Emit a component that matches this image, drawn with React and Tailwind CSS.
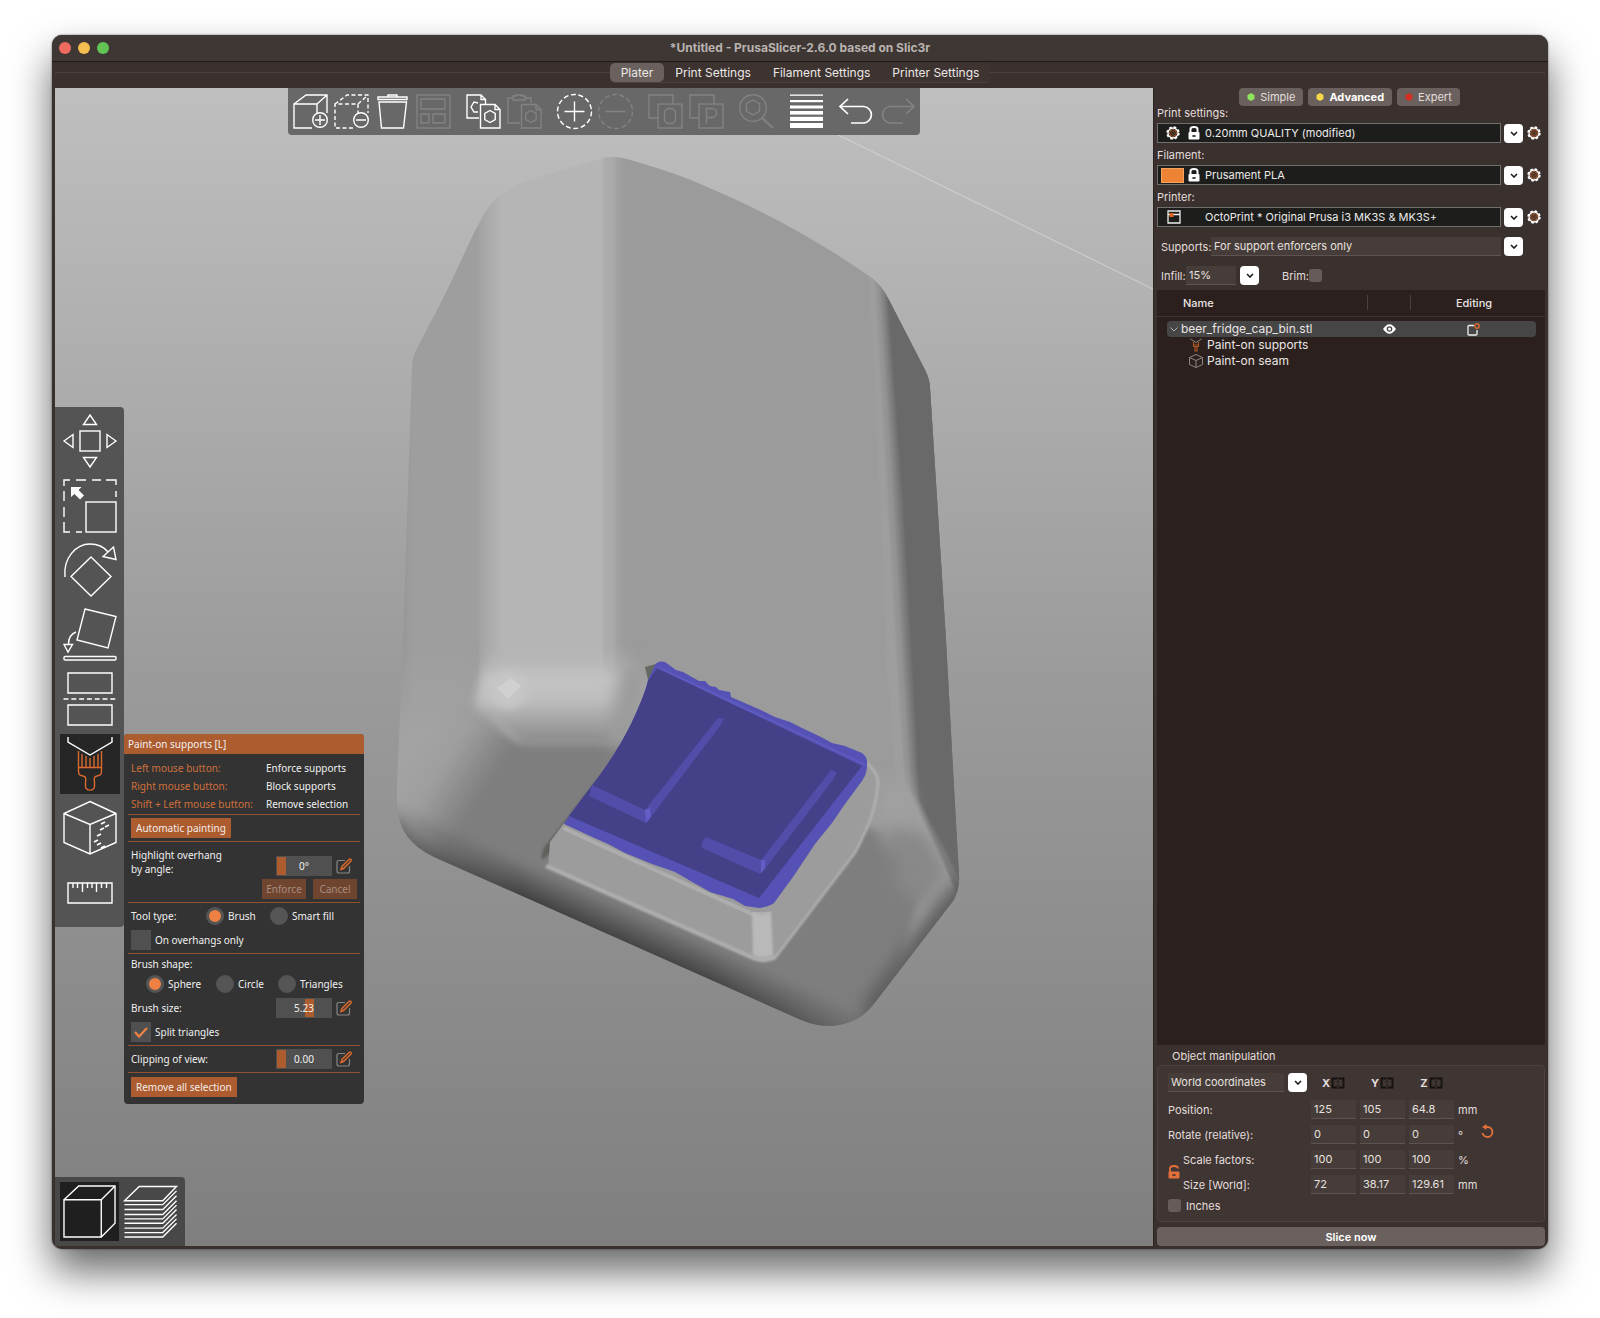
import React, { useState } from "react";

const Icon = ({ size = 54, className = "", children }) => (
    <svg
        viewBox={`0 0 ${size} ${size}`}
        className={`block h-full w-full overflow-visible ${className}`}
        fill="none"
        stroke="currentColor"
        strokeWidth="1.4"
        aria-hidden="true"
    >
        {children}
    </svg>
);

const hex = (cx, cy, r) =>
    [[0, -1], [0.87, -0.5], [0.87, 0.5], [0, 1], [-0.87, 0.5], [-0.87, -0.5]]
        .map(([x, y]) => `${cx + x * r},${cy + y * r}`)
        .join(" ");

const topIcons = {
    add: (
        <>
            <path d="M19 34H1V10H24V19M1 10L13 1H34V19M24 10L34 1" />
            <circle cx="27" cy="26" r="7.3" />
            <path d="M27 21V31M22 26H32" />
        </>
    ),
    remove: (
        <>
            <path d="M19 34H1V10H24V19M1 10L13 1H34V19M24 10L34 1" strokeDasharray="4 2.5" />
            <circle cx="27" cy="26" r="7.3" />
            <path d="M22 26H32" />
        </>
    ),
    trash: (
        <>
            <path d="M3 3H32V5.5H3ZM13 3V1H22V3M4 8L6.5 34H28.5L31.5 8Z" />
        </>
    ),
    arrange: (
        <>
            <rect x="1" y="1" width="33" height="33" />
            <path d="M5 5H29V15H5ZM5 20H13V29H5ZM17 20H29V29H17Z" />
        </>
    ),
    copy: (
        <>
            <path d="M13 24H1V1H15L19.5 5.500V10M15 1V5.500H19.500M12 9L8 8L5 13L8 18H12" />
            <path d="M14.500 10.500H29L34 15.500V34H14.500ZM29 10.500V15.500H34" />
            <polygon points={hex(24, 22.500, 6)} />
        </>
    ),
    paste: (
        <>
            <path d="M13 29H1V4H6M18 4H24V9M6 2H9V1H15V2H18V6H6Z" />
            <path d="M14.500 10.500H29L34 15.500V34H14.500ZM29 10.500V15.500H34" />
            <polygon points={hex(24, 22.500, 6)} />
        </>
    ),
    addInstance: (
        <>
            <circle cx="17.5" cy="17.5" r="17" strokeDasharray="5 2.6" />
            <path d="M17.500 7.500V27.500M7.500 17.500H27.500" />
        </>
    ),
    removeInstance: (
        <>
            <circle cx="17.5" cy="17.5" r="17" strokeDasharray="5 2.600" />
            <path d="M7.500 17.500H27.500" />
        </>
    ),
    splitObjects: (
        <>
            <path d="M10 24H1V1H25V10" />
            <rect x="10" y="10" width="24" height="24" />
            <rect x="16.500" y="14.500" width="11" height="15" rx="4.500" />
        </>
    ),
    splitParts: (
        <>
            <path d="M10 24H1V1H25V10" />
            <rect x="10" y="10" width="24" height="24" />
            <path d="M17.500 30V14.500H23A4.500 4.500 0 0 1 23 23.500H17.500" />
        </>
    ),
    search: (
        <>
            <circle cx="14" cy="14" r="13.3" />
            <polygon points={hex(14, 13.500, 7.500)} />
            <path d="M23 24L34 34" strokeWidth="2.200" />
        </>
    ),
    layers: (
        <g fill="currentColor" stroke="none">
            <rect x="1" y="0.500" width="33" height="1.300" />
            <rect x="1" y="6" width="33" height="2.200" />
            <rect x="1" y="11.500" width="33" height="3" />
            <rect x="1" y="17" width="33" height="3.600" />
            <rect x="1" y="22.800" width="33" height="4.200" />
            <rect x="1" y="29" width="33" height="5" />
        </g>
    ),
    undo: <path d="M9 5L1 12.500L9 20M1 12.500H25A8.300 8.300 0 0 1 25 29H12" strokeWidth="1.700" />,
    redo: <path d="M26 5L34 12.500L26 20M34 12.500H10A8.300 8.300 0 0 0 10 29H23" strokeWidth="1.700" />,
};

const toolbarGroups = [
    [["add", true], ["remove", true], ["trash", true], ["arrange", false]],
    [["copy", true], ["paste", false]],
    [["addInstance", true], ["removeInstance", false]],
    [["splitObjects", false], ["splitParts", false]],
    [["search", false]],
    [["layers", true]],
    [["undo", true], ["redo", false]],
];

const gizmos = [
    {
        name: "Move",
        art: (
            <>
                <rect x="17" y="17" width="20" height="20" />
                <path d="M27 1L33.500 10.500H20.500ZM27 53L33.500 43.500H20.500ZM1 27L10 20.500V33.500ZM53 27L44 20.500V33.500Z" />
            </>
        ),
    },
    {
        name: "Scale",
        art: (
            <>
                <path d="M1 7V1H7M13 1H23M29 1H38M43 1H53V6M53 12V18M1 12V22M1 28V38M1 43V53H7M13 53H19" />
                <rect x="23" y="23" width="30" height="30" />
                <path d="M8 8H18.500L15.500 11L21 16.500L17 20.500L11.500 15L8 18Z" fill="currentColor" stroke="none" />
            </>
        ),
    },
    {
        name: "Rotate",
        art: (
            <>
                <path d="M2 34C0 15 13 1 27 1C34 1 41 4 45 9M50.500 4L40 13.500L53 16.500Z" />
                <path d="M28 14L48 33.500L28 53L8 33.500Z" />
            </>
        ),
    },
    {
        name: "Place on face",
        art: (
            <>
                <path d="M22 1L53 8.500L45 40L14 32ZM13 24C8 26 5.500 30 5.500 36M1 36.500H9.500L5 44Z" />
                <rect x="1" y="48.500" width="52" height="3.500" rx="1" />
            </>
        ),
    },
    {
        name: "Cut",
        art: (
            <>
                <path d="M5 1H49V21H5ZM5 33H49V53H5Z" />
                <path d="M0.500 27H53.500" strokeDasharray="5 2.800" />
            </>
        ),
    },
    {
        name: "Paint-on supports",
        active: true,
        art: (
            <>
                <path d="M5 0V5L27 18L49 5V0" />
                <g stroke="#d9692c">
                    <path d="M15.500 14V34C15.500 38 17 38.500 20 39C23 39.500 23 41 22.500 45V49C22.500 54.500 31.500 54.500 31.500 49V45C31 41 31 39.500 34 39C37 38.500 38.500 38 38.500 34V14M15.500 30.500H38.500M19 17V30M23 19V30M27 21V30M31 19V30M35 17V30" />
                </g>
            </>
        ),
    },
    {
        name: "Seam painting",
        art: (
            <>
                <path d="M27 0.500L53 12.500V41.500L27 53L1 41.500V12.500ZM1 12.500L27 23.500L53 12.500M27 23.500V53" />
                <path d="M38 23L42 21M42 26L46 24M37 29L41 27M34 35L38 33M31 41L35 39M34 44L38 42M38 47L42 45" strokeWidth="1.800" />
            </>
        ),
    },
    {
        name: "Measure",
        art: (
            <path d="M5 17H49V37H5ZM10 17V22M14.500 17V22M19.500 17V26M24.500 17V22M29 17V22M33.500 17V26M38.500 17V22M43.500 17V22" />
        ),
    },
];

const Model = () => (
    <svg
        viewBox="55 88 1098 1158"
        preserveAspectRatio="xMidYMid slice"
        className="absolute inset-0 h-full w-full"
        role="img"
        aria-label="beer_fridge_cap_bin.stl"
    >
        <defs>
            <linearGradient id="backdrop" x1="0" y1="0" x2="0" y2="1">
                <stop offset="0" stopColor="#c4c4c4" />
                <stop offset="0.480" stopColor="#9b9b9b" />
                <stop offset="0.820" stopColor="#848484" />
                <stop offset="1" stopColor="#777777" />
            </linearGradient>
            <linearGradient id="body" gradientUnits="userSpaceOnUse" x1="396" y1="0" x2="960" y2="0">
                <stop offset="0" stopColor="#929292" />
                <stop offset="0.030" stopColor="#9e9e9e" />
                <stop offset="0.145" stopColor="#9e9e9e" />
                <stop offset="0.150" stopColor="#a5a5a5" />
                <stop offset="0.165" stopColor="#ababab" />
                <stop offset="0.190" stopColor="#b5b5b5" />
                <stop offset="0.365" stopColor="#b5b5b5" />
                <stop offset="0.370" stopColor="#adadad" />
                <stop offset="0.385" stopColor="#aaaaaa" />
                <stop offset="0.392" stopColor="#a2a2a2" />
                <stop offset="0.408" stopColor="#9b9b9b" />
                <stop offset="1" stopColor="#9b9b9b" />
            </linearGradient>
            <linearGradient id="ridge" gradientUnits="userSpaceOnUse" x1="0" y1="648" x2="0" y2="750">
                <stop offset="0" stopColor="#b5b5b5" stopOpacity="0" />
                <stop offset="0.300" stopColor="#c3c3c3" />
                <stop offset="0.500" stopColor="#bfbfbf" />
                <stop offset="0.800" stopColor="#9a9a9a" />
                <stop offset="1" stopColor="#808080" />
            </linearGradient>
            <linearGradient id="corner" gradientUnits="userSpaceOnUse" x1="415" y1="745" x2="485" y2="790">
                <stop offset="0" stopColor="#a3a3a3" />
                <stop offset="0.400" stopColor="#9f9f9f" />
                <stop offset="1" stopColor="#7e7e7e" />
            </linearGradient>
            <linearGradient id="cornerFade" gradientUnits="userSpaceOnUse" x1="0" y1="640" x2="0" y2="740">
                <stop offset="0" stopColor="#000" />
                <stop offset="1" stopColor="#fff" />
            </linearGradient>
            <mask id="cornerMask" maskUnits="userSpaceOnUse" x="380" y="600" width="200" height="300">
                <rect x="380" y="600" width="200" height="300" fill="url(#cornerFade)" />
            </mask>
            <linearGradient id="underside" gradientUnits="userSpaceOnUse" x1="634" y1="904" x2="618" y2="940">
                <stop offset="0" stopColor="#7e7e7e" stopOpacity="0" />
                <stop offset="0.350" stopColor="#6e6e6e" />
                <stop offset="1" stopColor="#404040" />
            </linearGradient>
            <linearGradient id="undersideFade" gradientUnits="userSpaceOnUse" x1="400" y1="0" x2="880" y2="0">
                <stop offset="0" stopColor="#222" />
                <stop offset="0.250" stopColor="#fff" />
                <stop offset="0.650" stopColor="#eee" />
                <stop offset="1" stopColor="#555" />
            </linearGradient>
            <mask id="undersideMask" maskUnits="userSpaceOnUse" x="380" y="780" width="520" height="270">
                <rect x="380" y="780" width="520" height="270" fill="url(#undersideFade)" />
            </mask>
            <filter id="soft4" x="-20%" y="-20%" width="140%" height="140%"><feGaussianBlur stdDeviation="4" /></filter>
            <filter id="soft8" x="-60%" y="-60%" width="220%" height="220%"><feGaussianBlur stdDeviation="8" /></filter>
            <filter id="soft1"><feGaussianBlur stdDeviation="1" /></filter>
            <clipPath id="bodyClip">
                <path d="M602 158Q612 156 623 158Q670 171 698 183Q790 221 872 278Q882 286 889 300L925 370Q930 380 930 388L946 640L954 787L959 875Q960 888 954 900L877 1000Q866 1015 855 1020Q830 1032 801 1020L434 857Q398 840 397 805V783L403 640L412 367Q412 358 416 350L437 310Q449 287 458 267L472 237L485 212Q500 189 533 179Z" />
            </clipPath>
        </defs>
        <rect x="0" y="0" width="1300" height="1400" fill="url(#backdrop)" />
        <path d="M820 126L1153 289" stroke="#d2d2d2" />
        <g clipPath="url(#bodyClip)">
            <rect x="390" y="150" width="580" height="890" fill="url(#body)" />

            {/* right wall */}
            <path d="M869 270L880 500L888 690L896 790L960 900L980 640L930 260Z" fill="#9e9e9e" filter="url(#soft1)" />
            <path d="M875 278L888 500L897 660L905 780L960 900L980 640L930 260Z" fill="#949494" filter="url(#soft1)" />
            <path d="M880 284L894 500L902 640L911 790L960 900L980 640L930 260Z" fill="#858585" filter="url(#soft1)" />
            <path d="M884 288L898 500L906 640L915 790L960 900L980 640L930 260Z" fill="#777777" filter="url(#soft1)" />
            <path d="M887 294L902 500L910 640L919 800L960 880L980 640L930 260Z" fill="#696969" filter="url(#soft1)" />

            {/* front bottom face */}
            <path d="M510 742H640L760 820L890 830L925 880L880 1030L828 1050L434 882L396 850L455 740Z" fill="#7e7e7e" filter="url(#soft4)" />
            <g mask="url(#cornerMask)">
                <path d="M370 620H478V700L518 745L440 880L370 860Z" fill="url(#corner)" filter="url(#soft4)" />
            </g>
            <path d="M488 646H624L650 690L616 745H522L474 705Z" fill="url(#ridge)" filter="url(#soft4)" />
            <path d="M622 660L650 664V700L618 755L608 735Z" fill="#9b9b9b" filter="url(#soft8)" />
            <ellipse cx="508" cy="690" rx="19" ry="19" fill="#c6c6c6" filter="url(#soft4)" />
            <path d="M497 688L511 678L521 686L508 699Z" fill="#d0d0d0" />
            <path d="M648 640H868L888 690L896 790L870 800L760 740L650 690Z" fill="#9b9b9b" filter="url(#soft1)" />
            <ellipse cx="895" cy="812" rx="18" ry="34" fill="#a0a0a0" filter="url(#soft8)" />
            <path d="M885 825L925 835L946 870L925 905L900 890Z" fill="#888888" filter="url(#soft8)" />

            {/* underside and rounded corners */}
            <path d="M394 826Q408 852 440 866L480 884" stroke="#606060" strokeWidth="16" strokeLinecap="round" fill="none" filter="url(#soft8)" />
            <g mask="url(#undersideMask)">
                <path d="M385 793L900 1022V1060L385 860Z" fill="url(#underside)" />
            </g>
            <path d="M966 870L936 905L864 1000L862 1040L900 1030L980 900Z" fill="#5e5e5e" filter="url(#soft8)" />
        </g>

        {/* recess around the painted face */}
        <path d="M657 662Q640 735 594 783L550 840Q540 850 542 860L552 852L600 785Q640 730 652 680Z" fill="#5f625c" filter="url(#soft1)" />
        <path d="M645 667L656 664L649 684Z" fill="#656a61" />
        <path d="M564 823L550 842L548 867L753 957Q763 963 776 957L855 853Q876 815 878 783L877 773L866 760L759 890Z" fill="#9c9c9c" />
        <path d="M546 866L753 958Q763 963 776 957" stroke="#b1b1b1" strokeWidth="4" fill="none" filter="url(#soft1)" />
        <path d="M776 957L855 853Q876 815 878 783Q879 774 866 762" stroke="#b8b8b8" strokeWidth="2" fill="none" filter="url(#soft1)" />
        <path d="M563 828L752 914H770" stroke="#adadad" strokeWidth="4" fill="none" />
        <path d="M752 912Q762 918 771 911L773 955Q763 960 753 955Z" fill="#b9b9b9" filter="url(#soft1)" />

        {/* enforced area */}
        <path d="M655 665Q658 660 665 662L676 670L683 672L699 681L705 681L710 686L716 687L719 690L730 692L731 697L763 711L775 717L790 722L804 729L819 736L832 743L845 746L862 753Q868 757 867 765Q867 774 862 781L845 804L832 823L815 844L793 877L774 903Q769 907 759 908L745 906L733 899L710 892L694 883L675 872L652 864L625 853L608 844L590 836L564 824L571 813L594 783Q618 751 632 722Q645 694 648 680Z" fill="#5652b5" />
        <path d="M657 668L862 766L759 898L569 816L594 783Q618 751 632 722Q645 694 648 681Z" fill="#444188" />
        <path d="M592 785L645 810L718 718L724 719L720 726L651 817L646 823L589 796Z" fill="#514da8" />
        <path d="M702 842L706 837L761 860L831 770L837 772L833 780L764 870L760 874L702 848Z" fill="#514da8" />
        <path d="M645 810L646 823L651 817L650 808ZM761 860V873L765 868V860Z" fill="#625ec5" />
        <path d="M657 667L866 765" stroke="#6460c6" strokeWidth="2" opacity="0.600" />
    </svg>
);

const Gear = () => (
    <svg viewBox="0 0 14 14" className="h-[14px] w-[14px] shrink-0" fill="none" aria-hidden="true">
        <circle cx="7" cy="7" r="5.900" stroke="#fff" strokeWidth="1.600" strokeDasharray="2.600 2.034" />
        <circle cx="7" cy="7" r="5" stroke="#fff" strokeWidth="1.300" />
        <circle cx="7" cy="7" r="3.400" stroke="#b5612f" strokeWidth="1" />
        <circle cx="7" cy="7" r="1.500" stroke="#8a4a25" strokeWidth="0.800" />
    </svg>
);

const Lock = () => (
    <svg viewBox="0 0 12 14" className="h-[14px] w-[12px] shrink-0" aria-hidden="true">
        <path d="M2.500 6V3Q2.500 1 6 1T9.500 3V6" fill="none" stroke="#fff" strokeWidth="2" />
        <rect x="0.500" y="6" width="11" height="7.500" rx="1" fill="#fff" />
        <path d="M4 10H8M6 9V11" stroke="#1e1e1e" strokeWidth="1.200" />
    </svg>
);

const Chevron = () => (
    <span className="flex h-[19px] w-[19px] shrink-0 items-center justify-center rounded bg-white">
        <svg viewBox="0 0 8 5" className="h-[5px] w-[8px]" fill="none" stroke="#1c1c1c" strokeWidth="1.600" aria-hidden="true">
            <path d="M1 1L4 4L7 1" />
        </svg>
    </span>
);

const field = "min-w-0 appearance-none border-b border-[#5d5451] bg-[#463c3a] px-[3px] text-[11px] leading-[18px] text-[#e6e1df] outline-none";

const Preset = ({ id, label, value, icons, first }) => (
    <div>
        <label htmlFor={id} className={`flex items-center ${first ? "h-[17px] pb-[3px]" : "h-[22px] pt-[2px]"}`}>
            {label}
        </label>
        <div className="flex items-center pr-1">
            <div className="relative flex-1">
                <select
                    id={id}
                    className="block h-[20px] w-full appearance-none border border-[#6f6f6f] bg-[#1d1d1c] pl-[47px] text-[11px] leading-[18px] text-[#ecebea] outline-none"
                >
                    <option>{value}</option>
                </select>
                <div className="pointer-events-none absolute inset-y-0 left-1 flex items-center gap-1">{icons}</div>
            </div>
            <span className="ml-[3px] flex"><Chevron /></span>
            <button type="button" aria-label={`Edit ${label}`} className="ml-1"><Gear /></button>
        </div>
    </div>
);

const modes = [
    { name: "Simple", dot: "text-[#8ee45a]" },
    { name: "Advanced", dot: "text-[#f7d84b]", active: true },
    { name: "Expert", dot: "text-[#d12f24]" },
];

const Mirror = () => (
    <svg viewBox="0 0 14 12" className="h-[12px] w-[14px]" fill="none" stroke="#15110f" strokeWidth="1.800" aria-hidden="true">
        <path d="M6 1.500H1.500V10.500H6M8 1.500H12.500V10.500H8" />
        <path d="M7 0V12" strokeWidth="1" strokeDasharray="2.500 1" />
    </svg>
);

const AxisRow = ({ label, values, unit, children }) => (
    <div className="flex h-[19px] items-center gap-1">
        <span className="flex-1">{label}</span>
        {values.map((v, i) => (
            <input key={i} aria-label={`${label} ${"XYZ"[i]}`} defaultValue={v} className={`${field} h-[19px] w-[45px]`} />
        ))}
        <span className="w-[19px]">{unit}</span>
        <span className="flex w-[53px]">{children}</span>
    </div>
);

const Sidebar = () => (
    <aside className="flex w-[392px] shrink-0 flex-col border-l border-[#2b2422] bg-[#3a302d] pl-[3px] text-[11px] leading-[14px] text-[#e3dedc]">
        <div className="flex justify-center gap-[5px] pr-[3px]">
            {modes.map((m) => (
                <button
                    key={m.name}
                    type="button"
                    className={`flex h-[18px] items-center gap-[5px] rounded bg-[#6a615e] px-2 ${m.active ? "font-bold text-white" : ""}`}
                >
                    <svg viewBox="0 0 8 8" className={`h-2 w-2 ${m.dot}`} fill="currentColor" aria-hidden="true">
                        <polygon points={hex(4, 4, 4)} />
                    </svg>
                    {m.name}
                </button>
            ))}
        </div>

        <Preset
            first
            id="print"
            label="Print settings:"
            value="0.20mm QUALITY (modified)"
            icons={<><span className="flex w-[23px] justify-center"><Gear /></span><Lock /></>}
        />
        <Preset
            id="filament"
            label="Filament:"
            value="Prusament PLA"
            icons={<><span className="h-[15px] w-[23px] border border-[#f5a45f] bg-[#ee8433]" /><Lock /></>}
        />
        <Preset
            id="printer"
            label="Printer:"
            value="OctoPrint * Original Prusa i3 MK3S & MK3S+"
            icons={
                <svg viewBox="0 0 14 14" className="ml-[6px] h-[14px] w-[14px]" fill="none" stroke="#eee" strokeWidth="1.300" aria-hidden="true">
                    <path d="M1 1H13V13H1ZM1 4.500H13" />
                    <rect x="2.500" y="3" width="4" height="4" fill="#e0641f" stroke="none" />
                </svg>
            }
        />

        <div className="mt-[10px] flex items-center pl-1 pr-[22px]">
            <label htmlFor="supports" className="w-[50px] whitespace-nowrap">Supports:</label>
            <select id="supports" className={`${field} h-[19px] flex-1`}>
                <option>For support enforcers only</option>
            </select>
            <span className="ml-[3px] flex"><Chevron /></span>
        </div>
        <div className="mt-[10px] flex items-center pl-1">
            <label htmlFor="infill" className="w-[25px]">Infill:</label>
            <select id="infill" className={`${field} h-[19px] w-[50px]`}>
                <option>15%</option>
            </select>
            <span className="ml-1 flex"><Chevron /></span>
            <label htmlFor="brim" className="ml-[23px]">Brim:</label>
            <input id="brim" type="checkbox" className="h-[13px] w-[13px] appearance-none rounded-[3px] bg-[#655c59]" />
        </div>

        <div className="mt-[5px] flex-1 bg-[#2b201e]">
            <table className="w-full table-fixed text-[12px] leading-[16px] text-[#eae5e3]">
                <colgroup>
                    <col />
                    <col className="w-[44px]" />
                    <col className="w-[134px]" />
                </colgroup>
                <thead>
                    <tr className="h-[26px] border-b border-[#3d3330] text-[11px]">
                        <th className="pl-[26px] text-left font-medium">Name</th>
                        <th aria-label="Visible"><div className="h-[15px] border-x border-[#4a413e]" /></th>
                        <th className="pr-2 font-medium">Editing</th>
                    </tr>
                    <tr className="h-[5px]"><td colSpan={3} /></tr>
                </thead>
                <tbody>
                    <tr className="h-[16px]">
                        <td className="whitespace-nowrap p-0 pl-[10px]">
                            <div className="flex h-[16px] items-center gap-[3px] rounded-l bg-[#464646] pl-[3px]">
                                <svg viewBox="0 0 8 5" className="h-[5px] w-[8px]" fill="none" stroke="#b5b0ae" aria-hidden="true"><path d="M0.500 0.500L4 4L7.500 0.500" /></svg>
                                beer_fridge_cap_bin.stl
                            </div>
                        </td>
                        <td className="p-0">
                            <div className="flex h-[16px] items-center justify-center bg-[#464646]">
                                <svg viewBox="0 0 13 10" className="h-[10px] w-[13px]" aria-hidden="true">
                                    <path d="M0 5Q6.500 -4.500 13 5Q6.500 14.500 0 5Z" fill="#fff" />
                                    <circle cx="6.500" cy="5" r="2.800" fill="#464646" />
                                    <circle cx="6.500" cy="5" r="1.500" fill="#fff" />
                                </svg>
                            </div>
                        </td>
                        <td className="p-0 pr-[9px]">
                            <div className="flex h-[16px] items-center justify-center rounded-r bg-[#464646]">
                                <svg viewBox="0 0 13 13" className="h-[13px] w-[13px]" fill="none" aria-hidden="true">
                                    <path d="M7 2.500H2Q1 2.500 1 3.500V11Q1 12 2 12H9Q10 12 10 11V7" stroke="#eee" strokeWidth="1.300" />
                                    <circle cx="10" cy="3" r="2.200" stroke="#d9692c" strokeWidth="1.400" />
                                </svg>
                            </div>
                        </td>
                    </tr>
                    <tr className="h-[16px]">
                        <td className="p-0 pl-8" colSpan={3}>
                            <div className="flex h-[16px] items-center gap-1">
                                <svg viewBox="0 0 14 14" className="h-[14px] w-[14px]" fill="none" aria-hidden="true">
                                    <path d="M1.500 1L7 4.500L12.500 1" stroke="#8d8683" />
                                    <path d="M4.500 4V8.500H9.500V4M4.500 7H9.500M6 8.500V13H8V8.500" stroke="#a85526" strokeWidth="1.200" />
                                </svg>
                                Paint-on supports
                            </div>
                        </td>
                    </tr>
                    <tr className="h-[16px]">
                        <td className="p-0 pl-8" colSpan={3}>
                            <div className="flex h-[16px] items-center gap-1">
                                <svg viewBox="0 0 14 14" className="h-[14px] w-[14px]" fill="none" stroke="#8d8683" aria-hidden="true">
                                    <path d="M7 0.500L13.500 3.500V10.500L7 13.500L0.500 10.500V3.500ZM0.500 3.500L7 6.500L13.500 3.500M7 6.500V13.500" />
                                </svg>
                                Paint-on seam
                            </div>
                        </td>
                    </tr>
                </tbody>
            </table>
        </div>

        <h2 className="flex h-[20px] items-center pl-[15px] pt-[2px]">Object manipulation</h2>
        <section className="rounded border border-[#4b423f] bg-[#3f3533] px-[10px] pb-[9px] pt-[7px]">
            <div className="mb-2 flex items-center">
                <select aria-label="Coordinates" className={`${field} h-[19px] w-[116px]`}>
                    <option>World coordinates</option>
                </select>
                <span className="ml-1 flex"><Chevron /></span>
                <div className="ml-auto mr-[80px] flex gap-1">
                    {["X", "Y", "Z"].map((axis) => (
                        <button key={axis} type="button" aria-label={`Mirror ${axis}`} className="flex w-[45px] items-center justify-center gap-px font-bold">
                            {axis}
                            <Mirror />
                        </button>
                    ))}
                </div>
            </div>
            <div className="flex flex-col gap-[6px]">
                <AxisRow label="Position:" values={["125", "105", "64.8"]} unit="mm" />
                <AxisRow label="Rotate (relative):" values={["0", "0", "0"]} unit="°">
                    <button type="button" aria-label="Reset rotation" className="mb-2">
                        <svg viewBox="0 0 13 14" className="h-[14px] w-[13px]" fill="none" stroke="#e2703a" strokeWidth="1.900" aria-hidden="true">
                            <path d="M4 3H6.500A5 5 0 1 1 1.500 9" />
                            <path d="M1 3L5.500 0V6Z" fill="#e2703a" stroke="none" />
                        </svg>
                    </button>
                </AxisRow>
                <div className="flex items-center">
                    <button type="button" aria-label="Lock scale" className="w-[15px]">
                        <svg viewBox="0 0 12 14" className="h-[14px] w-[12px]" aria-hidden="true">
                            <path d="M2 7V3.500Q2 1 6 1T10 3.500" fill="none" stroke="#e2703a" strokeWidth="1.800" />
                            <rect x="0.500" y="6.500" width="11" height="7" rx="1" fill="#e2703a" />
                            <path d="M4 10H8M6 9V11" stroke="#3f3533" strokeWidth="1.200" />
                        </svg>
                    </button>
                    <div className="flex flex-1 flex-col gap-[6px]">
                        <AxisRow label="Scale factors:" values={["100", "100", "100"]} unit="%" />
                        <AxisRow label="Size [World]:" values={["72", "38.17", "129.61"]} unit="mm" />
                    </div>
                </div>
            </div>
            <label className="mt-[5px] flex h-[13px] items-center gap-[5px]">
                <input type="checkbox" className="h-[13px] w-[13px] appearance-none rounded-[3px] bg-[#655c59]" />
                Inches
            </label>
        </section>
        <button type="button" className="mt-[5px] h-[19px] rounded bg-[#6a615e] font-semibold text-white">
            Slice now
        </button>
    </aside>
);

const Divider = () => <hr className="border-[#8f5230]" />;

const orangeButton = "h-[20px] bg-[#ad5c2f] px-[5px] text-[#f4ece8]";

const Radio = ({ name, label, checked, className = "" }) => (
    <label className={`flex items-center gap-1 ${className}`}>
        <input
            type="radio"
            name={name}
            defaultChecked={checked}
            className="h-[18px] w-[18px] appearance-none rounded-full border-[3px] border-[#555] bg-[#555] checked:bg-[#ee8044]"
        />
        {label}
    </label>
);

const Tick = ({ label, checked }) => (
    <label className="flex h-[20px] items-center gap-1">
        <span className="relative flex">
            <input type="checkbox" defaultChecked={checked} className="peer h-[20px] w-[20px] appearance-none bg-[#505050]" />
            <svg viewBox="0 0 20 20" className="pointer-events-none absolute inset-0 hidden peer-checked:block" fill="none" stroke="#ee8044" strokeWidth="2.200" aria-hidden="true">
                <path d="M4 10L8 14.500L16 6" />
            </svg>
        </span>
        {label}
    </label>
);

const Slider = ({ label, value, position }) => (
    <div className="ml-auto flex items-center gap-1 pr-[5px]">
        <div className="relative flex">
            <input
                type="range"
                min="0"
                max="100"
                defaultValue={position}
                aria-label={label}
                className="h-[20px] w-[56px] appearance-none border border-[#505050] bg-[#505050] [&::-webkit-slider-thumb]:h-[18px] [&::-webkit-slider-thumb]:w-[9px] [&::-webkit-slider-thumb]:appearance-none [&::-webkit-slider-thumb]:bg-[#ad5c2f]"
            />
            <span className="pointer-events-none absolute inset-0 flex items-center justify-center">{value}</span>
        </div>
        <button type="button" aria-label={`Edit ${label}`}>
            <svg viewBox="0 0 16 16" className="h-[16px] w-[16px]" fill="none" aria-hidden="true">
                <path d="M9 2.500H3Q1 2.500 1 4.500V13Q1 15 3 15H11.500Q13.500 15 13.500 13V8" stroke="#858585" strokeWidth="1.200" />
                <path d="M5 11.500L6 8.500L13 1.500Q14 0.500 15 1.500Q15.500 2.500 14.500 3.500L7.500 10.500Z" stroke="#d9692c" strokeWidth="1.500" />
            </svg>
        </button>
    </div>
);

const PaintPanel = () => (
    <div className="w-[240px] overflow-hidden rounded bg-[#333] pb-[7px] font-['Noto_Sans',sans-serif] text-[10px] leading-[14px] text-[#f0f0f0]">
        <h2 className="flex h-[20px] items-center bg-[#ad5c2f] px-1">Paint-on supports [L]</h2>
        <div className="px-1">
            <dl className="grid grid-cols-[135px_1fr] px-[3px] pb-px pt-[5px] leading-[18px] [&>dt]:text-[#d0703c]">
                <dt>Left mouse button:</dt>
                <dd>Enforce supports</dd>
                <dt>Right mouse button:</dt>
                <dd>Block supports</dd>
                <dt>Shift + Left mouse button:</dt>
                <dd>Remove selection</dd>
            </dl>
            <Divider />
            <div className="px-[3px] py-[3px]">
                <button type="button" className={orangeButton}>Automatic painting</button>
            </div>
            <Divider />
            <div className="px-[3px] pb-[3px] pt-[6px]">
                <div className="flex items-end">
                    <p>Highlight overhang<br />by angle:</p>
                    <Slider label="Overhang angle" value="0°" position={0} />
                </div>
                <div className="mt-[3px] flex justify-end gap-[7px]">
                    <button type="button" disabled className="h-[20px] w-[44px] bg-[#6f4530] text-[#a78c7f]">Enforce</button>
                    <button type="button" disabled className="h-[20px] w-[44px] bg-[#6f4530] text-[#a78c7f]">Cancel</button>
                </div>
            </div>
            <Divider />
            <div className="px-[3px] pb-[3px] pt-1">
                <div className="mb-[5px] flex items-center">
                    <span className="w-[75px]">Tool type:</span>
                    <Radio name="tool" label="Brush" checked className="w-[64px]" />
                    <Radio name="tool" label="Smart fill" />
                </div>
                <Tick label="On overhangs only" />
            </div>
            <Divider />
            <div className="px-[3px] py-[3px]">
                <p>Brush shape:</p>
                <div className="mt-1 flex pl-[15px]">
                    <Radio name="shape" label="Sphere" checked className="w-[70px]" />
                    <Radio name="shape" label="Circle" className="w-[62px]" />
                    <Radio name="shape" label="Triangles" />
                </div>
                <div className="mb-1 mt-[5px] flex items-center">
                    Brush size:
                    <Slider label="Brush size" value="5.23" position={62} />
                </div>
                <Tick label="Split triangles" checked />
            </div>
            <Divider />
            <div className="flex items-center px-[3px] py-[3px]">
                Clipping of view:
                <Slider label="Clipping of view" value="0.00" position={0} />
            </div>
            <Divider />
            <div className="px-[3px] pt-1">
                <button type="button" className={orangeButton}>Remove all selection</button>
            </div>
        </div>
    </div>
);

const Viewport = () => (
    <main className="relative min-w-0 flex-1 overflow-hidden">
        <Model />

        <div className="absolute left-[233px] top-0 flex gap-[15px] rounded-b bg-[#686868] px-[5px] pb-[6px] pt-[6px]">
            {toolbarGroups.map((group, i) => (
                <div key={i} className="flex gap-[6px]">
                    {group.map(([name, enabled]) => (
                        <button
                            key={name}
                            type="button"
                            aria-label={name}
                            disabled={!enabled}
                            className={`h-[35px] w-[35px] ${enabled ? "text-white" : "text-[#828282]"}`}
                        >
                            <Icon size={35}>{topIcons[name]}</Icon>
                        </button>
                    ))}
                </div>
            ))}
        </div>

        <div className="absolute left-0 top-[319px] flex items-end">
            <div className="flex h-[520px] w-[69px] flex-col items-center justify-between self-start rounded-r bg-[#545454] py-1">
                {gizmos.map((g) => (
                    <button
                        key={g.name}
                        type="button"
                        aria-label={g.name}
                        className={`h-[60px] w-[60px] p-[3px] text-white ${g.active ? "bg-[#262626]" : ""}`}
                    >
                        <Icon>{g.art}</Icon>
                    </button>
                ))}
            </div>
            <div className="pt-[327px]">
                <PaintPanel />
            </div>
        </div>

        <div className="absolute bottom-0 left-0 flex gap-[2px] rounded-tr bg-[#484848] py-[5px] pl-[5px] pr-1">
            <button type="button" aria-label="3D editor view" className="h-[59px] w-[59px] bg-[#1f1f1f] p-[3px] text-white">
                <Icon><path d="M1 15H39V53H1ZM1 15L16 1H53V39L39 53M39 15L53 1" /></Icon>
            </button>
            <button type="button" aria-label="Preview" className="h-[59px] w-[60px] p-[3px] text-white">
                <Icon>
                    <path d="M0 16H39L53 1.500H15Z" />
                    {[20, 25, 30, 34.500, 39, 44, 48.500, 53].map((y) => (
                        <path key={y} d={`M0 ${y}H39L53 ${y - 14}`} />
                    ))}
                </Icon>
            </button>
        </div>
    </main>
);

const tabs = ["Plater", "Print Settings", "Filament Settings", "Printer Settings"];

const App = () => {
    const [tab, setTab] = useState("Plater");

    return (
        <div className="flex min-h-screen flex-col bg-white px-[52px] pb-[69px] pt-[35px] font-['Inter','Liberation_Sans',sans-serif]">
            <div className="flex flex-1 flex-col overflow-hidden rounded-[10px] bg-[#3a302d] shadow-[0_0_2px_rgba(0,0,0,0.6),0_22px_40px_rgba(0,0,0,0.6)]">
                <header className="relative flex h-[27px] items-center justify-center border-b border-[#231b19] bg-[#3f3734]">
                    <div className="absolute left-[7px] flex gap-[7px]">
                        <button type="button" aria-label="Close" className="h-3 w-3 rounded-full bg-[#ee6a5f]" />
                        <button type="button" aria-label="Minimize" className="h-3 w-3 rounded-full bg-[#f5bd4f]" />
                        <button type="button" aria-label="Zoom" className="h-3 w-3 rounded-full bg-[#61c454]" />
                    </div>
                    <h1 className="text-[12px] font-bold text-[#b9b3b0]">*Untitled - PrusaSlicer-2.6.0 based on Slic3r</h1>
                </header>

                <nav className="flex h-[26px] items-start px-[3px]">
                    <span className="mt-[10px] h-px flex-1 bg-[#4b423f]" />
                    <div className="mt-px flex rounded-[5px] border-b border-[#4b423f] bg-[#3d3330]">
                        {tabs.map((t) => (
                            <button
                                key={t}
                                type="button"
                                onClick={() => setTab(t)}
                                className={`h-[19px] rounded-[5px] px-[11px] text-[12px] leading-[18px] text-[#ece8e6] ${t === tab ? "bg-[#6a615e]" : ""}`}
                            >
                                {t}
                            </button>
                        ))}
                    </div>
                    <span className="mt-[10px] h-px flex-1 bg-[#4b423f]" />
                </nav>

                <div className="flex flex-1 px-[3px] pb-[3px]">
                    <Viewport />
                    <Sidebar />
                </div>
            </div>
        </div>
    );
};

export default App;
